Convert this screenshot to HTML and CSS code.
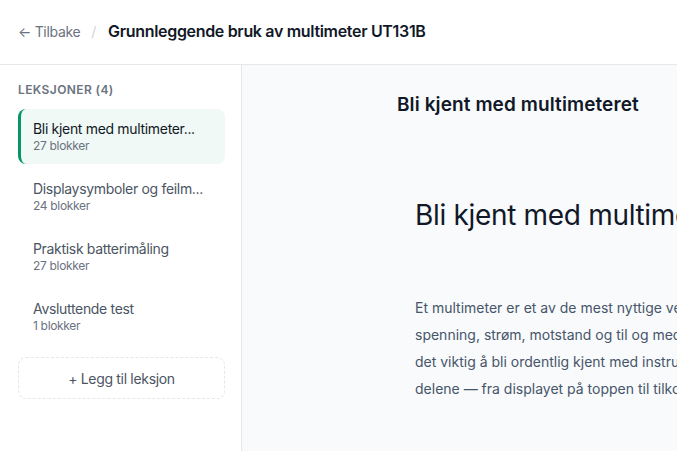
FILE: index.html
```html
<!DOCTYPE html>
<html>
<head>
    <title>Grunnleggende bruk av multimeter UT131B</title>
    <link rel="stylesheet" href="styles.css">
</head>
<body>
    <div class="topbar">
        <a class="back" href="#">&larr; Tilbake</a>
        <span class="sep">/</span>
        <h1 class="course-title">Grunnleggende bruk av multimeter UT131B</h1>
    </div>
    <div class="layout">
        <div class="sidebar">
            <div class="sidebar-label">LEKSJONER (4)</div>
            <div class="lesson-list">
                <div class="lesson active">
                    <div class="lesson-title">Bli kjent med multimeter...</div>
                    <div class="lesson-meta">27 blokker</div>
                </div>
                <div class="lesson">
                    <div class="lesson-title">Displaysymboler og feilm...</div>
                    <div class="lesson-meta">24 blokker</div>
                </div>
                <div class="lesson">
                    <div class="lesson-title">Praktisk batterimåling</div>
                    <div class="lesson-meta">27 blokker</div>
                </div>
                <div class="lesson">
                    <div class="lesson-title">Avsluttende test</div>
                    <div class="lesson-meta">1 blokker</div>
                </div>
            </div>
            <button class="add-lesson">+ Legg til leksjon</button>
        </div>
        <div class="content">
            <h2 class="lesson-heading">Bli kjent med multimeteret</h2>
            <div class="block">
                <h3 class="block-heading">Bli kjent med multimeteret</h3>
                <p class="block-text">Et multimeter er et av de mest nyttige verktøyene en elektriker har. Det måler<br>
                    spenning, strøm, motstand og til og med kontinuitet. Før du tar det i bruk er<br>
                    det viktig å bli ordentlig kjent med instrumentet og hva de ulike<br>
                    delene — fra displayet på toppen til tilkoblingene nederst — gjør.</p>
            </div>
        </div>
    </div>
</body>
</html>
```

FILE: styles.css
```css
body {
    margin: 0;
    font-family: 'Inter', 'Noto Sans', sans-serif;
    letter-spacing: -0.02em;
    color: #111827;
    background-color: #f8fafc;
    overflow: hidden;
}

.topbar {
    height: 65px;
    box-sizing: border-box;
    background-color: #fff;
    border-bottom: 1px solid #e5e7eb;
    display: flex;
    align-items: center;
    padding: 0 18px 2px 18px;
}

.back {
    color: #6b7280;
    text-decoration: none;
    font-size: 14px;
}

.sep {
    color: #d1d5db;
    margin: 0 12px 0 11px;
    font-size: 14px;
}

.course-title {
    margin: 0;
    font-size: 16px;
    font-weight: 600;
    color: #111827;
}

.layout {
    display: flex;
    height: calc(100vh - 65px);
}

.sidebar {
    width: 242px;
    flex-shrink: 0;
    box-sizing: border-box;
    background-color: #fff;
    border-right: 1px solid #e5e7eb;
    padding: 17px 16px 0 18px;
}

.sidebar-label {
    font-size: 12px;
    font-weight: 600;
    color: #6b7280;
    letter-spacing: 0.4px;
    margin-bottom: 12px;
}

.lesson-list {
    display: flex;
    flex-direction: column;
    gap: 5px;
}

.lesson {
    height: 55px;
    box-sizing: border-box;
    border-radius: 8px;
    border-left: 3px solid transparent;
    padding: 11px 12px 0 12px;
}

.lesson.active {
    background-color: #f0f9f5;
    border-left-color: #059669;
}

.lesson-title {
    font-size: 14px;
    color: #4b5563;
    white-space: nowrap;
}

.lesson.active .lesson-title {
    color: #111827;
}

.lesson-meta {
    font-size: 12px;
    color: #6b7280;
    margin-top: 1px;
}

.add-lesson {
    margin-top: 13px;
    width: 100%;
    height: 42px;
    background: #fff;
    border: 1px dashed #e2e8f0;
    border-radius: 8px;
    font-family: inherit;
    letter-spacing: inherit;
    font-size: 14px;
    color: #4b5563;
    cursor: pointer;
}

.content {
    flex: 1;
    padding: 28px 0 0 155px;
    overflow: hidden;
}

.lesson-heading {
    margin: 0;
    font-size: 19px;
    font-weight: 600;
    letter-spacing: 0.1px;
    color: #111827;
}

.block {
    width: 700px;
    padding: 0 0 0 18px;
}

.block-heading {
    margin: 82px 0 0 0;
    font-size: 28px;
    font-weight: 400;
    white-space: nowrap;
    color: #111827;
}

.block-text {
    margin: 62px 0 0 0;
    font-size: 14px;
    line-height: 27px;
    letter-spacing: normal;
    white-space: nowrap;
    color: #475569;
}
```
